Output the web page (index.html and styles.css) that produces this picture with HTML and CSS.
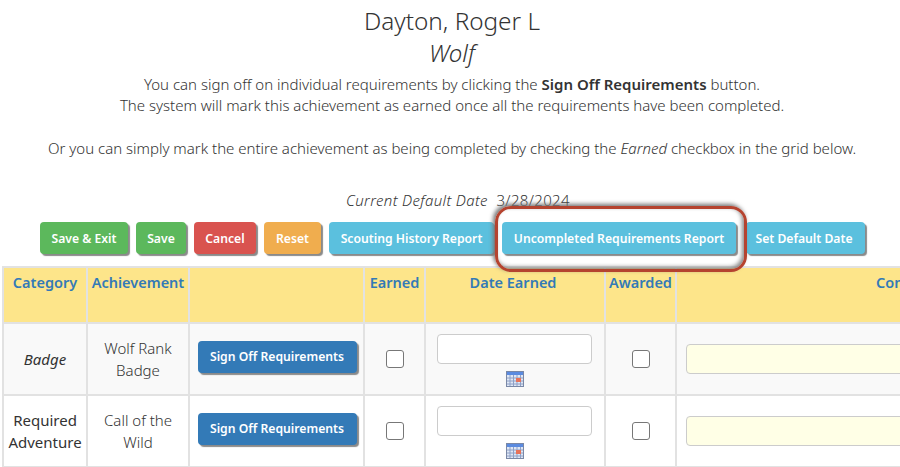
FILE: index.html
```html
<!DOCTYPE html>
<html lang="en">
<head>
  <meta charset="UTF-8">
  <title>Achievements</title>
  <link rel="stylesheet" href="styles.css">
</head>
<body>
  <svg width="0" height="0" class="defs">
    <symbol id="cal" viewBox="0 0 18 16">
      <rect x="0.5" y="0.5" width="17" height="15" fill="#dfe7f5" stroke="#7a88a6"/>
      <rect x="1" y="1" width="16" height="3" fill="#5b8be0"/>
      <path d="M1 7h16M1 10h16M1 13h16M4 4v11M7.500 4v11M11 4v11M14.500 4v11" stroke="#8ea0c6" fill="none"/>
      <rect x="10" y="7" width="5" height="4" fill="#e8735a"/>
    </symbol>
  </svg>

  <div class="heading">
    <h1>Dayton, Roger L</h1>
    <h2>Wolf</h2>
    <p class="intro">You can sign off on individual requirements by clicking the <b>Sign Off Requirements</b> button.<br>
      The system will mark this achievement as earned once all the requirements have been completed.</p>
    <p class="intro second">Or you can simply mark the entire achievement as being completed by checking the <i>Earned</i> checkbox in the grid below.</p>
    <p class="default-date"><i>Current Default Date</i>&nbsp; 3/28/2024</p>
  </div>

  <div class="toolbar">
    <button class="btn green save-exit">Save &amp; Exit</button>
    <button class="btn green save">Save</button>
    <button class="btn red cancel">Cancel</button>
    <button class="btn orange reset">Reset</button>
    <button class="btn blue history">Scouting History Report</button>
    <button class="btn blue uncompleted">Uncompleted Requirements Report</button>
    <button class="btn blue set-date">Set Default Date</button>
  </div>

  <table class="grid">
    <colgroup>
      <col class="c1"><col class="c2"><col class="c3"><col class="c4"><col class="c5"><col class="c6"><col class="c7">
    </colgroup>
    <thead>
      <tr>
        <th>Category</th><th>Achievement</th><th></th><th>Earned</th><th class="date-head">Date Earned</th><th>Awarded</th><th>Comments</th>
      </tr>
    </thead>
    <tbody>
      <tr class="odd">
        <td class="cat"><i>Badge</i></td>
        <td>Wolf Rank Badge</td>
        <td class="action"><button class="btn dark">Sign Off Requirements</button></td>
        <td><input class="check" type="checkbox"></td>
        <td class="dated"><input class="date" type="text"><svg class="cal" width="18" height="16"><use href="#cal"/></svg></td>
        <td><input class="check" type="checkbox"></td>
        <td><input class="comment" type="text"></td>
      </tr>
      <tr>
        <td class="cat">Required Adventure</td>
        <td>Call of the Wild</td>
        <td class="action"><button class="btn dark">Sign Off Requirements</button></td>
        <td><input class="check" type="checkbox"></td>
        <td class="dated"><input class="date" type="text"><svg class="cal" width="18" height="16"><use href="#cal"/></svg></td>
        <td><input class="check" type="checkbox"></td>
        <td><input class="comment" type="text"></td>
      </tr>
    </tbody>
  </table>

  <div class="callout"></div>
</body>
</html>
```

FILE: styles.css
```css
html, body {
  overflow: hidden;
}

body {
  margin: 0;
  width: 900px;
  height: 467px;
  position: relative;
  font-family: "Noto Sans", "Open Sans", sans-serif;
  font-size: 14px;
  color: #333;
  text-align: center;
}

.defs {
  display: block;
  height: 0;
}

.heading {
  padding-left: 4px;
}

h1 {
  margin: 0;
  padding-top: 6px;
  font-size: 24.300px;
  line-height: 30px;
  font-weight: 300;
}

h2 {
  margin: 0;
  padding-top: 2px;
  font-size: 24px;
  line-height: 29px;
  font-weight: 300;
  font-style: italic;
}

.intro {
  margin: 7px 0 0;
  line-height: 21px;
  font-size: 15px;
  font-weight: 300;
}

.intro.second {
  margin-top: 22px;
}

.intro b {
  font-weight: 600;
}

.default-date {
  margin: 31px 0 0;
  padding-left: 12px;
  line-height: 20px;
  font-size: 15px;
  font-weight: 300;
  letter-spacing: 0.35px;
}

.toolbar {
  display: flex;
  gap: 8px;
  margin-top: 12px;
  padding-left: 40px;
}

.btn {
  height: 32px;
  padding: 0;
  border: 0;
  border-radius: 4px;
  box-shadow: 2px 2px 1px #8a8a8a;
  color: #fff;
  font-family: inherit;
  font-size: 12.200px;
  font-weight: 600;
  white-space: nowrap;
}

.green { background: #5cb85c; }
.red { background: #d9534f; }
.orange { background: #f0ad4e; }
.blue { background: #5bc0de; }
.dark { background: #337ab7; width: 159px; margin-left: 1px; }

.save-exit { width: 88px; }
.save { width: 50px; }
.cancel { width: 62px; }
.reset { width: 57px; }
.history { width: 165px; }
.uncompleted { width: 234px; }
.set-date { width: 119px; margin-left: 2px; padding-right: 3px; }

.grid {
  table-layout: fixed;
  width: 1152px;
  margin: 12px 0 0 2px;
  border-collapse: collapse;
}

.c1 { width: 84px; }
.c2 { width: 102px; }
.c3 { width: 175px; }
.c4 { width: 61px; }
.c5 { width: 180px; }
.c6 { width: 71px; }

.grid th, .grid td {
  border: 2px solid #e2e2e2;
  text-align: center;
}

.grid th {
  height: 56px;
  box-sizing: border-box;
  padding: 3px 0 0;
  vertical-align: top;
  background: #fde58a;
  color: #337ab7;
  font-size: 14.500px;
  font-weight: 600;
  line-height: 22px;
}

.grid .date-head {
  padding-right: 4px;
}

.grid td {
  height: 72px;
  box-sizing: border-box;
  padding: 0 2px;
  line-height: 22px;
  font-size: 15px;
  font-weight: 300;
}

.grid .cat {
  font-weight: 400;
}

.grid .action {
  padding-bottom: 5px;
}

.grid .dated {
  vertical-align: top;
  padding-top: 10px;
}

.odd td {
  background: #f9f9f9;
}

.check {
  appearance: none;
  display: block;
  width: 18px;
  height: 18px;
  margin: 0 auto;
  border: 1px solid #777;
  border-radius: 3px;
  background: #fff;
}

.date {
  display: block;
  box-sizing: border-box;
  width: 155px;
  height: 30px;
  margin: 0 0 0 9px;
  border: 1px solid #ccc;
  border-radius: 4px;
  background: #fff;
}

.cal {
  display: block;
  margin: 7px auto 0;
}

.comment {
  display: block;
  box-sizing: border-box;
  width: 400px;
  height: 30px;
  margin-left: 7px;
  border: 1px solid #ccc;
  border-radius: 4px;
  background: #ffffe6;
}

.callout {
  position: absolute;
  left: 495px;
  top: 206px;
  width: 246px;
  height: 60px;
  border: 3px solid #b5432f;
  border-radius: 16px;
  box-shadow: -2px -2px 4px #777, inset -2px -2px 4px #888;
}
```
